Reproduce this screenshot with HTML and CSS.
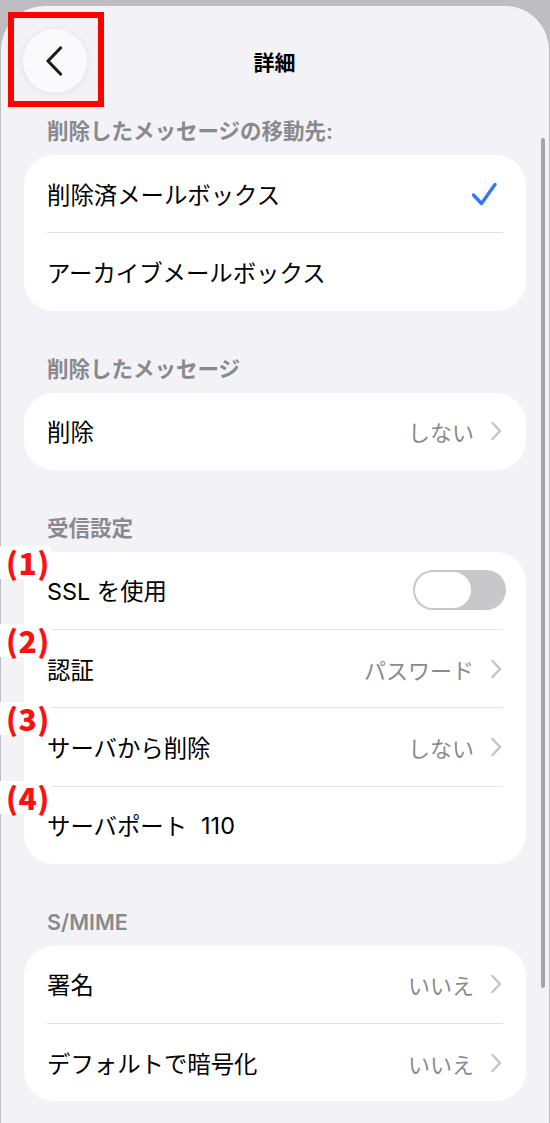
FILE: index.html
```html
<!DOCTYPE html>
<html lang="ja">
<head>
  <meta charset="utf-8">
  <title>詳細</title>
  <meta name="viewport" content="width=device-width, initial-scale=1">
  <link rel="stylesheet" href="styles.css">
</head>
<body>
  <div class="sheet">
    <div class="nav">
      <button class="back" aria-label="戻る">
        <svg width="18" height="30" viewBox="0 0 18 30"><path d="M15.5 2 L3 15 L15.5 28" fill="none" stroke="#1c1c1e" stroke-width="3.2" stroke-linecap="round" stroke-linejoin="round"/></svg>
      </button>
      <h1 class="title">詳細</h1>
      <div></div>
    </div>
    <div class="mark-box"></div>

    <h2 class="group-title first">削除したメッセージの移動先:</h2>
    <div class="card">
      <div class="row">
        <span class="label">削除済メールボックス</span>
        <svg class="check" width="27" height="26" viewBox="0 0 27 26"><path d="M2.5 14 L10.5 22.5 L24 3.5" fill="none" stroke="#3478f6" stroke-width="3.4" stroke-linecap="round" stroke-linejoin="round"/></svg>
      </div>
      <div class="sep"></div>
      <div class="row">
        <span class="label">アーカイブメールボックス</span>
      </div>
    </div>

    <h2 class="group-title">削除したメッセージ</h2>
    <div class="card">
      <div class="row">
        <span class="label">削除</span>
        <span class="value">しない</span>
        <svg class="chev" width="12" height="20" viewBox="0 0 12 20"><path d="M2.5 2 L10 10 L2.5 18" fill="none" stroke="#c4c4c8" stroke-width="2.4" stroke-linecap="round" stroke-linejoin="round"/></svg>
      </div>
    </div>

    <h2 class="group-title">受信設定</h2>
    <div class="card">
      <div class="row">
        <span class="note">(1)</span>
        <span class="label">SSL を使用</span>
        <span class="toggle"><span class="thumb"></span></span>
      </div>
      <div class="sep"></div>
      <div class="row">
        <span class="note">(2)</span>
        <span class="label">認証</span>
        <span class="value">パスワード</span>
        <svg class="chev" width="12" height="20" viewBox="0 0 12 20"><path d="M2.5 2 L10 10 L2.5 18" fill="none" stroke="#c4c4c8" stroke-width="2.4" stroke-linecap="round" stroke-linejoin="round"/></svg>
      </div>
      <div class="sep"></div>
      <div class="row">
        <span class="note">(3)</span>
        <span class="label">サーバから削除</span>
        <span class="value">しない</span>
        <svg class="chev" width="12" height="20" viewBox="0 0 12 20"><path d="M2.5 2 L10 10 L2.5 18" fill="none" stroke="#c4c4c8" stroke-width="2.4" stroke-linecap="round" stroke-linejoin="round"/></svg>
      </div>
      <div class="sep"></div>
      <div class="row">
        <span class="note">(4)</span>
        <span class="label">サーバポート</span>
        <span class="port">110</span>
      </div>
    </div>

    <h2 class="group-title">S/MIME</h2>
    <div class="card">
      <div class="row">
        <span class="label">署名</span>
        <span class="value">いいえ</span>
        <svg class="chev" width="12" height="20" viewBox="0 0 12 20"><path d="M2.5 2 L10 10 L2.5 18" fill="none" stroke="#c4c4c8" stroke-width="2.4" stroke-linecap="round" stroke-linejoin="round"/></svg>
      </div>
      <div class="sep"></div>
      <div class="row">
        <span class="label">デフォルトで暗号化</span>
        <span class="value">いいえ</span>
        <svg class="chev" width="12" height="20" viewBox="0 0 12 20"><path d="M2.5 2 L10 10 L2.5 18" fill="none" stroke="#c4c4c8" stroke-width="2.4" stroke-linecap="round" stroke-linejoin="round"/></svg>
      </div>
    </div>

    <div class="scrollbar"></div>
  </div>
</body>
</html>
```

FILE: styles.css
```css
*, *::before, *::after {
  box-sizing: border-box;
  margin: 0;
  padding: 0;
}

html, body {
  height: 100%;
}

body {
  background-color: #bdbdc2;
  font-family: "Inter", "Noto Sans CJK JP", sans-serif;
  color: #000000;
  overflow: hidden;
}

.sheet {
  position: relative;
  margin: 6px 1px 0;
  padding: 0 23px;
  min-height: calc(100% - 6px);
  background-color: #f2f2f7;
  border-radius: 44px 44px 0 0;
}

.nav {
  display: grid;
  grid-template-columns: 64px 1fr 64px;
  align-items: center;
  padding-top: 23px;
  margin-left: -1px;
}

.back {
  width: 64px;
  height: 64px;
  border: none;
  border-radius: 50%;
  background: #fafafc;
  box-shadow: 0 1px 8px rgba(0, 0, 0, 0.07);
  display: flex;
  align-items: center;
  justify-content: center;
  padding-right: 3px;
}

.title {
  text-align: center;
  font-size: 21px;
  font-weight: 700;
}

.mark-box {
  position: absolute;
  left: 7px;
  top: 6px;
  width: 96px;
  height: 95px;
  border: 6px solid #ff0000;
}

.group-title {
  font-size: 21.5px;
  font-weight: 600;
  line-height: 24px;
  color: #8a8a8e;
  padding-left: 23px;
  margin-top: 46px;
  margin-bottom: 12px;
}

.group-title.first {
  margin-top: 26px;
}

.card {
  background: #ffffff;
  border-radius: 30px;
}

.row {
  position: relative;
  display: flex;
  align-items: center;
  height: 77.25px;
  padding: 0 24px 0 23px;
}

.sep {
  height: 1px;
  margin: 0 23px;
  background: #e2e2e5;
}

.label {
  font-size: 23.4px;
  flex: 0 0 auto;
}

.value {
  margin-left: auto;
  font-size: 22px;
  color: #8a8a8e;
  margin-right: 16px;
}

.port {
  font-size: 23.4px;
  margin-left: 14px;
}

.check {
  margin-left: auto;
  margin-right: 4px;
}

.toggle {
  margin-left: auto;
  margin-right: -4px;
  width: 93px;
  height: 40px;
  border-radius: 20px;
  background: #c8c8cc;
  padding: 2px;
}

.thumb {
  display: block;
  width: 56px;
  height: 36px;
  border-radius: 18px;
  background: #ffffff;
}

.note {
  position: absolute;
  left: -24px;
  top: -6px;
  padding: 0 1px 0 6px;
  background: #ffffff;
  color: #ff1010;
  font-family: "Noto Sans CJK JP", sans-serif;
  font-size: 30px;
  font-weight: 900;
  line-height: 33px;
  letter-spacing: 0.5px;
}

.scrollbar {
  position: absolute;
  right: 4px;
  top: 132px;
  width: 4px;
  height: 850px;
  border-radius: 2px;
  background: #a5a5aa;
}
```
